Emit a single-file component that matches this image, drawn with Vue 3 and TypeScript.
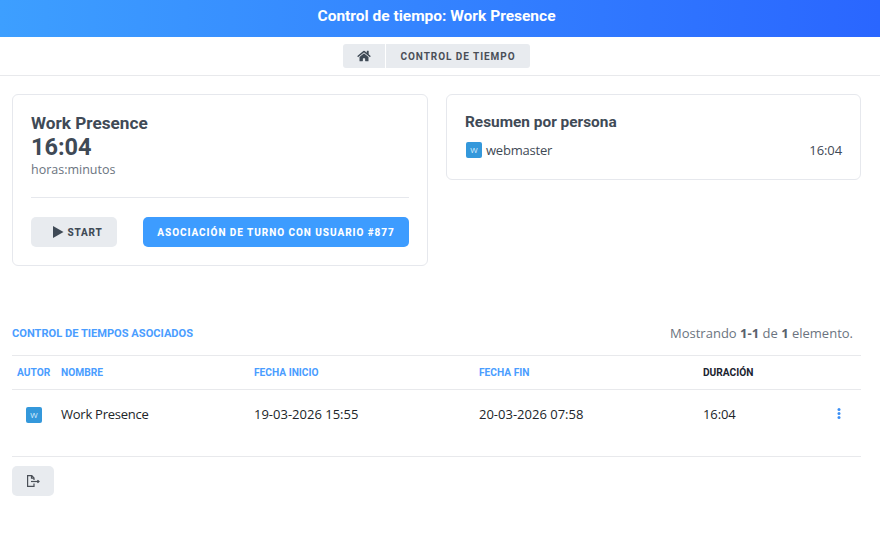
<script setup lang="ts">
interface Row { nombre: string; inicio: string; fin: string; duracion: string }
const rows: Row[] = [
  { nombre: 'Work Presence', inicio: '19-03-2026 15:55', fin: '20-03-2026 07:58', duracion: '16:04' },
]
</script>

<template>
  <div class="page">
    <header class="top">Control de tiempo: Work Presence</header>
    <nav class="crumbs">
      <a class="crumb home">
        <svg width="14" height="12" viewBox="0 0 576 512" fill="#3f4a56"><path d="M280.4 148.3 96 300.1V464a16 16 0 0 0 16 16l112-.3a16 16 0 0 0 15.9-16V368a16 16 0 0 1 16-16h64a16 16 0 0 1 16 16v95.6a16 16 0 0 0 16 16.1L464 480a16 16 0 0 0 16-16V300L295.700 148.300a12.200 12.200 0 0 0-15.300 0zM571.600 251.500 488 182.600V44.100a12 12 0 0 0-12-12h-56a12 12 0 0 0-12 12v72.600L318.500 43a48 48 0 0 0-61 0L4.300 251.500a12 12 0 0 0-1.600 16.900l25.500 31A12 12 0 0 0 45.200 301l235.200-193.700a12.200 12.200 0 0 1 15.300 0L530.900 301a12 12 0 0 0 16.900-1.600l25.500-31a12 12 0 0 0-1.700-16.900z"/></svg>
      </a>
      <a class="crumb label">CONTROL DE TIEMPO</a>
    </nav>

    <section class="cards">
      <article class="card main-card">
        <h2 class="title">Work Presence</h2>
        <div class="total">16:04</div>
        <div class="unit">horas:minutos</div>
        <hr class="rule" />
        <div class="actions">
          <button class="btn start">
            <svg width="11" height="12" viewBox="0 0 11 12" fill="#3f4a56"><path d="M0 0 10.500 6 0 12z"/></svg>
            START
          </button>
          <button class="btn primary">ASOCIACIÓN DE TURNO CON USUARIO #877</button>
        </div>
      </article>
      <article class="card side-card">
        <h3 class="side-title">Resumen por persona</h3>
        <div class="person">
          <span class="avatar">W</span>
          <span class="who">webmaster</span>
          <span class="hours">16:04</span>
        </div>
      </article>
    </section>

    <section class="list">
      <div class="list-head">
        <span class="list-title">CONTROL DE TIEMPOS ASOCIADOS</span>
        <span class="count">Mostrando <b>1-1</b> de <b>1</b> elemento.</span>
      </div>
      <table class="tbl">
        <colgroup>
          <col class="c1" /><col class="c2" /><col class="c3" /><col class="c4" /><col class="c5" /><col />
        </colgroup>
        <thead>
          <tr>
            <th>AUTOR</th><th>NOMBRE</th><th>FECHA INICIO</th><th>FECHA FIN</th><th class="sorted">DURACIÓN</th><th></th>
          </tr>
        </thead>
        <tbody>
          <tr v-for="r in rows" :key="r.nombre">
            <td class="av-cell"><span class="avatar">W</span></td>
            <td class="name">{{ r.nombre }}</td>
            <td>{{ r.inicio }}</td>
            <td>{{ r.fin }}</td>
            <td class="dur">{{ r.duracion }}</td>
            <td class="menu">
              <svg width="4" height="11" viewBox="0 0 4 11" fill="#3b8ff5"><circle cx="2" cy="1.500" r="1.500"/><circle cx="2" cy="5.500" r="1.500"/><circle cx="2" cy="9.500" r="1.500"/></svg>
            </td>
          </tr>
        </tbody>
      </table>
      <div class="foot">
        <button class="btn exit" aria-label="Salir">
          <svg width="14" height="13" viewBox="0 0 14 13" fill="none" stroke="#4a4f57" stroke-width="1.200"><path d="M8 5V3L5.800 .7H1.600v10.700H8V8.500"/><path d="M5.500 .7v2.500H8"/><path d="M5 6.500h7.500"/><path d="M11.500 5.200 13 6.500l-1.500 1.300" fill="#4a4f57"/></svg>
        </button>
      </div>
    </section>
  </div>
</template>

<style>
html, body { margin: 0; background: #fff; }
</style>

<style scoped>
.page {
  width: 880px;
  min-height: 542px;
  font-family: "Open Sans", "Noto Sans", sans-serif;
  font-size: 13px;
  color: #3f4a56;
}
.top {
  height: 37px;
  line-height: 32px;
  padding-right: 7px;
  text-align: center;
  color: #fff;
  font-family: Roboto, sans-serif;
  font-weight: 700;
  font-size: 15.500px;
  background: linear-gradient(90deg, #3d9fff, #2a66ff);
}
.crumbs {
  height: 39px;
  box-sizing: border-box;
  border-bottom: 1px solid #e8e9ec;
  display: flex;
  justify-content: center;
  gap: 1px;
  padding: 7px 7px 0 0;
}
.crumb {
  height: 24px;
  background: #e8ebef;
  display: flex;
  align-items: center;
  justify-content: center;
}
.home { width: 42px; border-radius: 3px 0 0 3px; }
.label {
  width: 144px;
  border-radius: 0 3px 3px 0;
  font-family: Roboto, sans-serif;
  font-weight: 700;
  font-size: 10px;
  letter-spacing: 0.950px;
  color: #4a4f57;
}
.cards {
  display: grid;
  grid-template-columns: 416px 415px;
  gap: 18px;
  align-items: start;
  padding: 18px 0 0 12px;
}
.card {
  box-sizing: border-box;
  border: 1px solid #e6e8ed;
  border-radius: 6px;
  padding: 18px;
}
.main-card { height: 172px; }
.side-card { height: 86px; }
.title {
  margin: 0;
  font-family: Roboto, sans-serif;
  font-weight: 700;
  font-size: 17.200px;
  line-height: 21px;
}
.total {
  font-family: Roboto, sans-serif;
  font-weight: 700;
  font-size: 23.500px;
  line-height: 27px;
}
.unit {
  font-size: 12.500px;
  line-height: 17px;
  color: #6b7480;
}
.rule {
  border: 0;
  border-top: 1px solid #e6e8ed;
  margin: 19px 0;
}
.actions {
  display: flex;
  justify-content: space-between;
}
.btn {
  border: 0;
  border-radius: 5px;
  height: 30px;
  padding: 0;
  display: flex;
  align-items: center;
  justify-content: center;
  font-family: Roboto, sans-serif;
  font-weight: 700;
  font-size: 10px;
  letter-spacing: 1px;
}
.start {
  width: 86px;
  gap: 3px;
  padding-left: 8px;
  box-sizing: border-box;
  background: #e8ebef;
  color: #3f4a56;
  font-weight: 800;
  letter-spacing: 0.800px;
}
.primary {
  width: 266px;
  background: #3d9cff;
  color: #fff;
  font-weight: 800;
  letter-spacing: 0.950px;
}
.side-title {
  margin: 0;
  font-family: Roboto, sans-serif;
  font-weight: 700;
  font-size: 15.400px;
  line-height: 19px;
}
.person {
  display: flex;
  align-items: center;
  margin-top: 9px;
  padding-left: 1px;
  line-height: 18px;
}
.who { margin-left: 4px; letter-spacing: -0.200px; }
.hours { margin-left: auto; letter-spacing: -0.100px; }
.avatar {
  display: inline-flex;
  align-items: center;
  justify-content: center;
  width: 16px;
  height: 16px;
  border-radius: 2px;
  background: #3498db;
  color: #dcefff;
  font-size: 8px;
  flex: none;
}
.list { padding: 0 19px 0 12px; margin-top: 58px; }
.list-head {
  display: flex;
  justify-content: space-between;
  align-items: center;
  height: 18px;
  padding-right: 8px;
  margin-bottom: 13px;
}
.list-title {
  font-family: Roboto, sans-serif;
  font-weight: 700;
  font-size: 11.100px;
  color: #4a9dff;
}
.count { color: #6b7480; }
.count b { color: #5a626d; }
.tbl {
  width: 100%;
  table-layout: fixed;
  border-collapse: collapse;
}
.c1 { width: 44px; }
.c2 { width: 193px; }
.c3 { width: 225px; }
.c4 { width: 224px; }
.c5 { width: 120px; }
.tbl th {
  height: 33px;
  padding: 0 0 0 5px;
  text-align: left;
  font-family: Roboto, sans-serif;
  font-weight: 700;
  font-size: 10.200px;
  color: #4a9dff;
  border-top: 1px solid #e8e9ec;
  border-bottom: 1px solid #e8e9ec;
}
.tbl th.sorted { color: #1c2430; }
.tbl td {
  height: 67px;
  padding: 15px 0 0 5px;
  box-sizing: border-box;
  vertical-align: top;
  line-height: 18px;
  color: #212529;
  border-bottom: 1px solid #e8e9ec;
}
.tbl td.name { letter-spacing: -0.250px; }
.tbl td.dur { letter-spacing: -0.100px; }
.tbl td.av-cell { padding-left: 14px; }
.tbl td.av-cell .avatar { margin-top: 2px; display: flex; }
.tbl td.menu { padding: 18px 0 0 19px; }
.tbl td.menu svg { display: block; }
.foot { padding-top: 9px; }
.exit { width: 42px; background: #e8ebef; }
</style>
